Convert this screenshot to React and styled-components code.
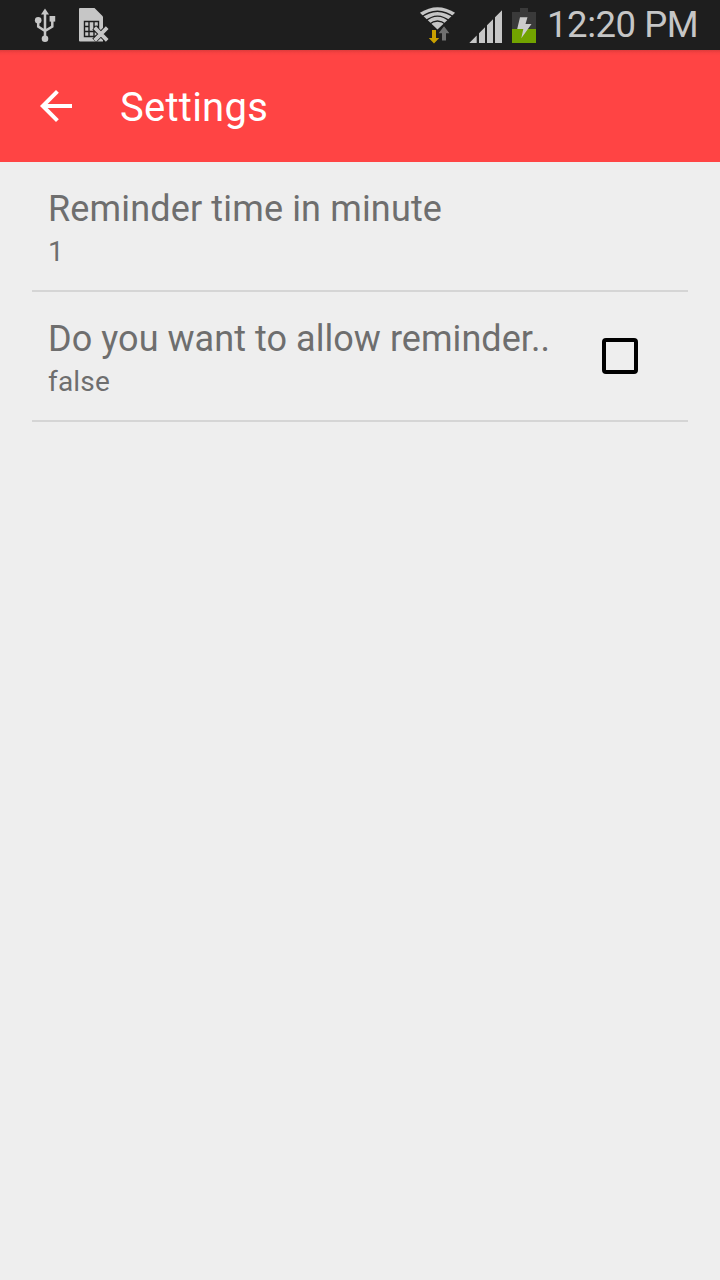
import React from 'react';
import styled, { createGlobalStyle } from 'styled-components';

const GlobalStyle = createGlobalStyle`
  * { box-sizing: border-box; }
  body {
    margin: 0;
    background: #eeeeee;
    font-family: Roboto, "Liberation Sans", sans-serif;
  }
`;

const Screen = styled.div`
  width: 720px;
  height: 1280px;
  display: flex;
  flex-direction: column;
  background: #eeeeee;
  overflow: hidden;
`;

const StatusBar = styled.header`
  flex: none;
  height: 50px;
  display: flex;
  justify-content: space-between;
  background: #1e1e1e;
`;

const StatusIcons = styled.div`
  display: flex;
  padding-left: ${(p) => p.$inset || 0}px;
`;

const StatusGlyph = styled.svg`
  display: block;
  height: 50px;
  flex: none;
`;

const Clock = styled.time`
  width: 174px;
  padding-left: 1px;
  line-height: 50px;
  font-size: 36.5px;
  letter-spacing: ${(p) => p.$tracking}px;
  white-space: nowrap;
  color: #c6c6c6;
`;

const AppBar = styled.div`
  flex: none;
  height: 112px;
  display: flex;
  align-items: center;
  padding-left: 32px;
  background: linear-gradient(#de3b3b, #f94242 3px, #ff4444 6px);
`;

const BackButton = styled.button`
  width: 48px;
  height: 48px;
  margin-right: 40px;
  padding: 0;
  border: 0;
  background: none;
  svg { display: block; }
`;

const Title = styled.h1`
  margin: 0;
  padding-top: 4px;
  font-size: 40px;
  font-weight: 400;
  line-height: 48px;
  letter-spacing: ${(p) => p.$tracking}px;
  color: #ffffff;
`;

const PreferenceList = styled.main`
  display: flex;
  flex-direction: column;
  padding: 0 32px;
`;

const Preference = styled.div`
  height: 130px;
  display: flex;
  align-items: center;
  justify-content: space-between;
  padding: 0 50px 0 16px;
  border-bottom: 2px solid #d5d5d5;
`;

const Labels = styled.div`
  display: flex;
  flex-direction: column;
  padding-top: 2px;
  white-space: nowrap;
  color: #6e6e6e;
`;

const Name = styled.span`
  font-size: 36px;
  line-height: 48px;
  letter-spacing: ${(p) => p.$tracking}px;
`;

const Value = styled.span`
  font-size: 28px;
  line-height: 37px;
  letter-spacing: ${(p) => p.$tracking}px;
`;

const CheckBox = styled.button`
  width: 36px;
  height: 36px;
  padding: 0;
  border: 4px solid #000000;
  border-radius: 4px;
  background: none;
`;

const Usb = () => (
  <StatusGlyph width="46" viewBox="30 0 46 50" fill="#c6c6c6">
    <path d="M45 12V39M38.2 20V26.5L45 31M52.3 19V26.5L45 31" fill="none" stroke="#c6c6c6" strokeWidth="2.5" />
    <path d="M45 8.5L49 14.5H41Z" />
    <circle cx="38.2" cy="20.3" r="3.3" />
    <rect x="49.6" y="16" width="5.6" height="5.6" />
    <circle cx="45" cy="38.7" r="3.3" />
  </StatusGlyph>
);

const SimMissing = () => (
  <StatusGlyph width="36" viewBox="76 0 36 50">
    <path d="M80 8H94.5L103 16.5V41.5H80Q79 41.5 79 40.5V9Q79 8 80 8Z" fill="#c6c6c6" />
    <path d="M84.5 21.5H98.5V36.5H84.5ZM89 21.5V36.5M94 21.5V36.5M84.5 26.5H89M84.5 31.5H98.5M94 26.5H98.5" fill="none" stroke="#1e1e1e" strokeWidth="1.4" />
    <path d="M94.3 27.5L107.3 40.5M107.3 27.5L94.3 40.5" stroke="#1e1e1e" strokeWidth="5.6" />
    <path d="M94.7 27.7L107.2 40.3M107.2 27.7L94.7 40.3" stroke="#c6c6c6" strokeWidth="3.8" />
  </StatusGlyph>
);

const Wifi = () => (
  <StatusGlyph width="48" viewBox="416 0 48 50">
    <path d="M419.9 12.8Q437.5 1.6 455.1 12.8L437.5 29.5Z" fill="#c6c6c6" />
    <path d="M420 18Q437.5 4.5 455 18M425 21.5Q437.5 10.8 450 21.5M429 24.5Q437.5 17.5 446 24.5" fill="none" stroke="#1e1e1e" strokeWidth="1.35" />
    <path d="M432 30H436V38H439.2L434 43.5L428.8 38H432Z" fill="#c9a000" />
    <path d="M444 26.3L449.4 33.3H446V40.5H442V33.3H438.6Z" fill="#707070" />
  </StatusGlyph>
);

const Signal = () => (
  <StatusGlyph width="44" viewBox="464 0 44 50" fill="#c6c6c6">
    <path d="M469.3 43L476.7 35.6V43ZM479 43V33.3L485 27.3V43ZM487 43V25.3L493 19.3V43ZM495 43V17.3L502 10.3V43Z" />
  </StatusGlyph>
);

const Battery = () => (
  <StatusGlyph width="38" viewBox="508 0 38 50">
    <path d="M520 8H528V12H536V29H512V12H520Z" fill="#3a3a3a" />
    <path d="M512 29H536V43H512Z" fill="#72a300" />
    <path d="M520 17.3H527.5L525.5 24H531.5L521.3 38.3L523.3 29H517.2Z" fill="#cccccc" />
  </StatusGlyph>
);

export default function App() {
  return (
    <>
      <GlobalStyle />
      <Screen>
        <StatusBar>
          <StatusIcons $inset={30}>
            <Usb />
            <SimMissing />
          </StatusIcons>
          <StatusIcons>
            <Wifi />
            <Signal />
            <Battery />
            <Clock $tracking={-0.45}>12:20 PM</Clock>
          </StatusIcons>
        </StatusBar>
        <AppBar>
          <BackButton aria-label="Back">
            <svg width="48" height="48" viewBox="0 0 24 24" fill="#ffffff">
              <path d="M20 11H7.83l5.59-5.59L12 4l-8 8 8 8 1.41-1.41L7.83 13H20v-2z" />
            </svg>
          </BackButton>
          <Title $tracking={0.25}>Settings</Title>
        </AppBar>
        <PreferenceList>
          <Preference>
            <Labels>
              <Name $tracking={0.15}>Reminder time in minute</Name>
              <Value $tracking={0}>1</Value>
            </Labels>
          </Preference>
          <Preference>
            <Labels>
              <Name $tracking={0.05}>Do you want to allow reminder..</Name>
              <Value $tracking={0.2}>false</Value>
            </Labels>
            <CheckBox role="checkbox" aria-checked="false" aria-label="Allow reminder" />
          </Preference>
        </PreferenceList>
      </Screen>
    </>
  );
}
